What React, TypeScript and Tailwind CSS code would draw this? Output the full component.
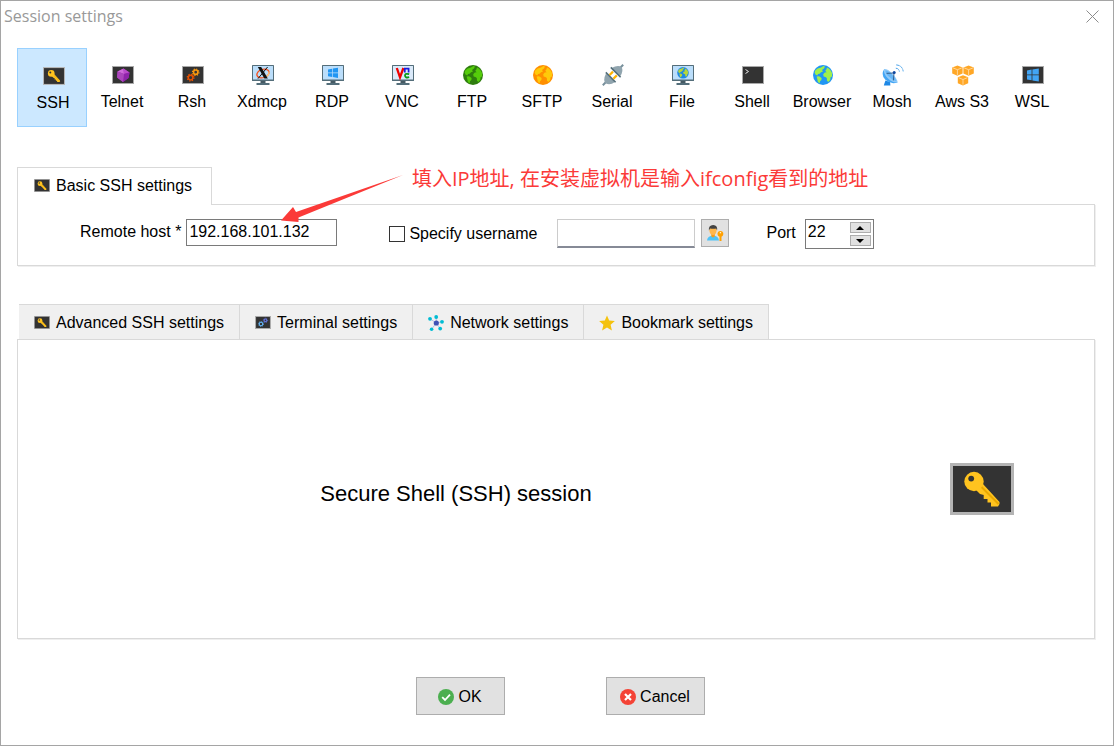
import { useState, type ReactNode } from "react";

function KeyTerminal({ className }: { className: string }) {
  return (
    <svg viewBox="0 0 64 52" className={className} aria-hidden="true">
      <rect width="64" height="52" fill="#b4b4b4" />
      <rect x="3" y="3" width="58" height="46" fill="#333333" />
      <path
        d="M33 21 L49.5 39 V41 L48 43.5 H41 V39.5 H37.5 V36 H33.7 V32 L30 31 L26 27 Z"
        fill="#ffc31f"
      />
      <path d="M31 23.5 L48.5 41" stroke="#e9a800" strokeWidth="2" />
      <circle cx="24" cy="18.5" r="9.7" fill="#ffc31f" />
      <circle cx="21.2" cy="15.6" r="2.9" fill="#333333" />
    </svg>
  );
}

function Screen({ children }: { children: ReactNode }) {
  return (
    <svg width="22" height="18" viewBox="0 0 22 18" aria-hidden="true">
      <rect width="22" height="18" fill="#a9a9a9" />
      <rect x="1" y="1" width="20" height="16" fill="#333333" />
      {children}
    </svg>
  );
}

function Monitor({ fill = "#bbdefb", children }: { fill?: string; children: ReactNode }) {
  return (
    <svg width="22" height="20" viewBox="0 0 22 20" aria-hidden="true">
      <rect width="22" height="16" rx="0.6" fill="#546e7a" />
      <rect x="1" y="1" width="20" height="13.5" fill={fill} />
      <rect x="8.5" y="16" width="5" height="2.5" fill="#455a64" />
      <rect x="4.5" y="18" width="13" height="2" fill="#546e7a" />
      {children}
    </svg>
  );
}

function GlobeShape({ sea, land }: { sea: string; land: string }) {
  return (
    <>
      <circle cx="10" cy="10" r="10" fill={sea} />
      <path
        d="M2.2 5.4 L4.6 3.4 L8 2.6 L10.4 1 L12 1.6 L11 3.4 L9 5 L10 6.4 L8 7.2 L6.6 8.8 L5 9 L4.4 10.6 L2.4 9.4 L1.6 7.4 Z"
        fill={land}
      />
      <path d="M3.6 11.6 L6 11.2 L8.6 13 L8.4 15 L7 16.2 L6.6 18.4 L4.8 16.8 L4.4 14.4 Z" fill={land} />
      <path
        d="M14 2.4 Q18 4.4 19 8 L19 11.4 L17.6 12.2 L17.2 15 L15.4 17 L14 15.8 L13.8 13 L12.4 12 L10.6 11.4 L10.2 9.2 L11.8 7.6 L13.6 7.2 L12.2 5.8 L13.4 4.6 Z"
        fill={land}
      />
    </>
  );
}

function Globe({ sea, land }: { sea: string; land: string }) {
  return (
    <svg width="20" height="20" viewBox="0 0 20 20" aria-hidden="true">
      <GlobeShape sea={sea} land={land} />
    </svg>
  );
}

function Gear({ x, y, r, color }: { x: number; y: number; r: number; color: string }) {
  return (
    <g transform={`translate(${x} ${y})`} fill="none" stroke={color}>
      <circle r={r} strokeWidth="1.5" />
      <circle r={r + 1.1} strokeWidth="1.2" strokeDasharray={`${(r + 1.1) * 0.393} ${(r + 1.1) * 0.393}`} />
    </g>
  );
}

function TelnetIcon() {
  return (
    <Screen>
      <path d="M11.5 2.5 L17.5 6.5 L16.5 12 L11 16 L5 11.5 L5.5 5.5 Z" fill="#9c27b0" />
      <path d="M11.5 2.5 L5.5 5.5 L12 8 Z" fill="#ce6bdb" />
      <path d="M11.5 2.5 L17.5 6.5 L12 8 Z" fill="#ba4bc9" />
      <path d="M12 8 L17.5 6.5 L16.5 12 L11 16 Z" fill="#8e24aa" />
      <path d="M5.5 5.5 L12 8 L11 16 L5 11.5 Z" fill="#ab47bc" />
    </Screen>
  );
}

function RshIcon() {
  return (
    <Screen>
      <Gear x={13.7} y={6.2} r={2.1} color="#fb9a0e" />
      <Gear x={8.6} y={11.6} r={2.3} color="#e65100" />
    </Screen>
  );
}

function XdmcpIcon() {
  return (
    <Monitor>
      <ellipse cx="11" cy="8.5" rx="6.3" ry="4.2" fill="none" stroke="#f4511e" strokeWidth="1.3" transform="rotate(-18 11 8.5)" />
      <path d="M12 12.8 Q17 11 17.2 6.5" fill="none" stroke="#ffcc80" strokeWidth="1.2" />
      <path d="M5.8 2 H9.2 L15.8 13.6 H12.4 Z" fill="#111111" />
      <path d="M15.6 2 L6 13.6" stroke="#111111" strokeWidth="1" />
    </Monitor>
  );
}

function RdpIcon() {
  return (
    <Monitor>
      <path d="M6 4.4 L10.2 3.7 V7.5 H6 Z M10.9 3.6 L16 2.8 V7.5 H10.9 Z M6 8.2 H10.2 V12 L6 11.3 Z M10.9 8.2 H16 V12.9 L10.9 12.1 Z" fill="#2196f3" />
    </Monitor>
  );
}

function VncIcon() {
  return (
    <Monitor fill="#dbeafa">
      <path d="M4.8 3 L8 12.4 L11.4 3" fill="none" stroke="#f00000" strokeWidth="2.3" />
      <path d="M12.8 7.4 V3.6 H16.6 V7.4" fill="none" stroke="#1b1bdc" strokeWidth="1.7" />
      <path d="M17.2 9.2 Q13 8 13 10.6 Q13 13.2 17.2 12.2" fill="none" stroke="#0b9a17" strokeWidth="1.8" />
    </Monitor>
  );
}

function SerialIcon() {
  return (
    <svg width="22" height="22" viewBox="0 0 22 22" aria-hidden="true">
      <path d="M0.8 21.2 L4 18 M18 4 L21.2 0.8" stroke="#78909c" strokeWidth="2" />
      <path d="M4 9.5 L13 18 Q8 21.5 4 19.5 Q0.5 16.5 4 9.5 Z" fill="#90a4ae" />
      <path d="M9.5 4 L18 12.5 Q22 7 19.5 3 Q16 0.5 9.5 4 Z" fill="#90a4ae" />
      <path d="M3.8 8.4 L13.6 18.2 M8.8 3.4 L18.6 13.2" stroke="#546e7a" strokeWidth="1.6" />
      <path d="M7.6 11 L11 7.6 M11.4 14.8 L14.8 11.4" stroke="#ffb300" strokeWidth="2.2" />
    </svg>
  );
}

function FileIcon() {
  return (
    <Monitor>
      <g transform="translate(5.2 2) scale(0.58)">
        <GlobeShape sea="#1e88e5" land="#b5d63a" />
      </g>
    </Monitor>
  );
}

function ShellIcon() {
  return (
    <Screen>
      <path d="M3.5 3.5 L6.5 5.5 L3.5 7.5" fill="none" stroke="#e6e6e6" strokeWidth="1" />
    </Screen>
  );
}

function MoshIcon() {
  return (
    <svg width="22" height="22" viewBox="0 0 22 22" aria-hidden="true">
      <path d="M3.4 16.5 L1.8 21.6 H8.4 L8 18 Z" fill="#1e88e5" />
      <path d="M2.2 5 Q-1.4 11 3.4 15.8 Q8.8 20.8 15.6 18.4 Z" fill="#42a5f5" />
      <path d="M2.2 5 Q0.8 9.4 5.8 14.2 Q10.8 19.2 15.6 18.4 Q15.4 14.6 10.2 9.4 Q5.4 4.6 2.2 5 Z" fill="#90caf9" />
      <path d="M3.4 6.4 Q3.4 9.4 7 12.8 Q10.8 16.6 14.2 17 Q13.6 14 9.8 10.2 Q6 6.6 3.4 6.4 Z" fill="#64b5f6" />
      <path d="M12 9 L4.6 9.4 M12 9 L11.4 16.4" stroke="#37618f" strokeWidth="1" />
      <circle cx="12.2" cy="8.6" r="1.5" fill="#0d47a1" />
      <path d="M13.8 4.2 Q17 4.4 17.4 7.6 M14.2 0.9 Q20.4 1.4 21.2 7.4" fill="none" stroke="#4aa3ea" strokeWidth="1" strokeDasharray="3.4 0.8" />
    </svg>
  );
}

function Cube({ x, y }: { x: number; y: number }) {
  return (
    <g transform={`translate(${x} ${y})`}>
      <path d="M5.2 0 L10.4 2 V8 L5.2 10.4 L0 8 V2 Z" fill="#ffa726" />
      <path d="M0.8 2.5 L5.2 4.3 L9.6 2.5 M5.2 4.3 V9.6" fill="none" stroke="#ffe0b2" strokeWidth="0.8" />
    </g>
  );
}

function AwsIcon() {
  return (
    <svg width="22" height="21" viewBox="0 0 22 21" aria-hidden="true">
      <Cube x={0.2} y={0.4} />
      <Cube x={11.4} y={0.4} />
      <Cube x={5.8} y={10.2} />
    </svg>
  );
}

function WslIcon() {
  return (
    <Screen>
      <path d="M5 4.4 L9.6 3.6 V8.5 H5 Z M10.4 3.5 L16.8 2.4 V8.5 H10.4 Z M5 9.3 H9.6 V14.2 L5 13.5 Z M10.4 9.3 H16.8 V15.4 L10.4 14.4 Z" fill="#42a5f5" />
    </Screen>
  );
}

function TerminalGears() {
  return (
    <svg viewBox="0 0 22 18" className="h-[13px] w-4" aria-hidden="true">
      <rect width="22" height="18" fill="#a9a9a9" />
      <rect x="1.4" y="1.4" width="19.2" height="15.2" fill="#333333" />
      <Gear x={14.4} y={6} r={1.9} color="#6576e0" />
      <Gear x={8.2} y={11} r={2.4} color="#64b5f6" />
    </svg>
  );
}

function NetworkIcon() {
  return (
    <svg viewBox="0 0 16 16" className="size-4" aria-hidden="true">
      <path d="M8.3 8 L8.2 2 M8.3 8 L2 3.8 M8.3 8 L14 6.8 M8.3 8 L12.2 13.6 M8.3 8 L3.6 14.2" stroke="#b9c0e6" strokeWidth="1" />
      <circle cx="8.3" cy="8" r="2.6" fill="#3f51b5" />
      <g fill="#00bcd4">
        <circle cx="8.2" cy="2" r="1.9" />
        <circle cx="2" cy="3.8" r="1.9" />
        <circle cx="14" cy="6.8" r="1.9" />
        <circle cx="12.2" cy="13.6" r="1.9" />
        <circle cx="3.6" cy="14.2" r="1.8" />
      </g>
    </svg>
  );
}

function StarIcon() {
  return (
    <svg viewBox="0 0 16 16" className="size-4" aria-hidden="true">
      <path d="M8 0.4 L10.2 5.6 L15.9 6.1 L11.6 9.8 L12.9 15.4 L8 12.4 L3.1 15.4 L4.4 9.8 L0.1 6.1 L5.8 5.6 Z" fill="#f4c20d" />
    </svg>
  );
}

function UserKeyIcon() {
  return (
    <svg width="17" height="16" viewBox="0 0 17 16" aria-hidden="true">
      <path d="M0 15.6 Q0.4 11 6 10.6 Q11.6 11 12 15.6 Z" fill="#4fc3f7" />
      <path d="M4.3 8.5 H7.8 V11.4 L6 12.6 L4.3 11.4 Z" fill="#f59c1a" />
      <ellipse cx="6" cy="5.4" rx="3.6" ry="4.6" fill="#ffb74d" />
      <path d="M1.9 5.6 Q1.2 0.2 6.2 0 Q10.9 0.2 10.1 5.6 L9.2 3.6 Q6 4.2 3 3.4 Z" fill="#424242" />
      <circle cx="13.4" cy="8.8" r="2.9" fill="#ffa000" />
      <rect x="12.5" y="11" width="2" height="5" fill="#ffa000" />
      <rect x="12.8" y="7" width="1.3" height="1.3" fill="#fff3cd" />
    </svg>
  );
}

const sessionTypes: { name: string; icon: ReactNode }[] = [
  { name: "SSH", icon: <KeyTerminal className="h-[18px] w-[22px]" /> },
  { name: "Telnet", icon: <TelnetIcon /> },
  { name: "Rsh", icon: <RshIcon /> },
  { name: "Xdmcp", icon: <XdmcpIcon /> },
  { name: "RDP", icon: <RdpIcon /> },
  { name: "VNC", icon: <VncIcon /> },
  { name: "FTP", icon: <Globe sea="#2e7d0e" land="#55cc0b" /> },
  { name: "SFTP", icon: <Globe sea="#ff8f00" land="#ffca0a" /> },
  { name: "Serial", icon: <SerialIcon /> },
  { name: "File", icon: <FileIcon /> },
  { name: "Shell", icon: <ShellIcon /> },
  { name: "Browser", icon: <Globe sea="#2196f3" land="#a0f04a" /> },
  { name: "Mosh", icon: <MoshIcon /> },
  { name: "Aws S3", icon: <AwsIcon /> },
  { name: "WSL", icon: <WslIcon /> },
];

const settingTabs: { name: string; icon: ReactNode }[] = [
  { name: "Advanced SSH settings", icon: <KeyTerminal className="h-[13px] w-4" /> },
  { name: "Terminal settings", icon: <TerminalGears /> },
  { name: "Network settings", icon: <NetworkIcon /> },
  { name: "Bookmark settings", icon: <StarIcon /> },
];

const panel = "border border-[#d9d9d9] shadow-[1px_1px_0_#efefef]";
const spinButton = "flex h-[11px] w-[21px] items-center justify-center border border-[#adadad] bg-[#e1e1e1]";
const dialogButton = "flex h-[38px] items-center justify-center gap-1 border border-[#adadad] bg-[#e1e1e1] pt-px";

export default function App() {
  const [session, setSession] = useState("SSH");
  const [port, setPort] = useState("22");
  const step = (by: number) => setPort(String((Number(port) || 0) + by));

  return (
    <div className="flex min-h-screen flex-col border border-[#a5a5a5] bg-white font-['Liberation_Sans',Arial,sans-serif] text-base leading-5 text-black">
      <header className="flex h-[30px] items-center justify-between pr-3.5 pl-[3px]">
        <h1 className="font-['Open_Sans','Noto_Sans',sans-serif] text-base leading-5 text-[#999999]">Session settings</h1>
        <button type="button" aria-label="Close">
          <svg width="13" height="13" viewBox="0 0 13 13" aria-hidden="true">
            <path d="M0.5 0.5 L12.5 12.5 M12.5 0.5 L0.5 12.5" stroke="#8c8c8c" strokeWidth="1" />
          </svg>
        </button>
      </header>

      <nav className="mt-[17px] flex flex-wrap px-4" aria-label="Session type">
        {sessionTypes.map(({ name, icon }) => (
          <button
            key={name}
            type="button"
            aria-pressed={session === name}
            onClick={() => setSession(name)}
            className={
              session === name
                ? "flex h-[79px] w-[70px] flex-col items-center gap-1.5 border border-[#99d1ff] bg-[#cce8ff] pt-4 pl-0.5"
                : "flex h-[79px] w-[70px] flex-col items-center gap-1.5 border border-transparent pt-[15px]"
            }
          >
            <span className="flex h-[22px] items-center pl-0.5">{icon}</span>
            <span className="whitespace-nowrap">{name}</span>
          </button>
        ))}
      </nav>

      <main className="flex flex-1 flex-col px-4 pt-10">
        <section className="relative mr-0.5" aria-label="Basic SSH settings">
          <div role="tablist" className="flex">
            <button
              type="button"
              role="tab"
              aria-selected="true"
              className="relative z-10 -mb-px flex h-[38px] items-center gap-1.5 border border-b-0 border-[#d9d9d9] bg-white pr-[19px] pb-0.5 pl-4"
            >
              <KeyTerminal className="h-[13px] w-4" />
              Basic SSH settings
            </button>
          </div>
          <div className={`flex h-[62px] items-start pt-3.5 pl-[62px] ${panel}`}>
            <label htmlFor="host" className="leading-[26px] whitespace-nowrap">Remote host *</label>
            <input
              id="host"
              defaultValue="192.168.101.132"
              className="ml-[5px] h-[27px] w-[151px] border border-[#7a7a7a] px-0.5 pb-0.5 outline-none"
            />
            <div className="ml-[52px] flex h-[30px] items-center gap-1">
              <input
                id="specify"
                type="checkbox"
                className="size-4 appearance-none border border-[#333333] bg-white checked:bg-[#333333]"
              />
              <label htmlFor="specify" className="whitespace-nowrap">Specify username</label>
            </div>
            <input
              aria-label="Username"
              className="ml-5 h-[29px] w-[138px] border border-[#cccccc] border-b-2 border-b-[#868a96] px-0.5 outline-none"
            />
            <button
              type="button"
              aria-label="Choose user"
              className="ml-1.5 flex size-7 items-center justify-center border border-[#adadad] bg-[#e1e1e1]"
            >
              <UserKeyIcon />
            </button>
            <label htmlFor="port" className="ml-[37px] leading-7">Port</label>
            <div className="ml-[9px] flex h-[30px] w-[69px] border border-[#7a7a7a] bg-white pr-0.5">
              <input
                id="port"
                inputMode="numeric"
                value={port}
                onChange={(e) => setPort(e.target.value)}
                className="h-6 min-w-0 flex-1 pl-0.5 outline-none"
              />
              <div className="flex flex-col gap-0.5 pt-0.5">
                <button type="button" aria-label="Increase port" onClick={() => step(1)} className={spinButton}>
                  <svg width="8" height="4" viewBox="0 0 8 4" aria-hidden="true">
                    <path d="M4 0 L8 4 H0 Z" />
                  </svg>
                </button>
                <button type="button" aria-label="Decrease port" onClick={() => step(-1)} className={spinButton}>
                  <svg width="8" height="4" viewBox="0 0 8 4" aria-hidden="true">
                    <path d="M0 0 H8 L4 4 Z" />
                  </svg>
                </button>
              </div>
            </div>
          </div>
          <svg
            className="pointer-events-none absolute top-2 left-[264px] z-20"
            width="124"
            height="48"
            viewBox="0 0 124 48"
            aria-hidden="true"
          >
            <path d="M0 45.5 L12 32 L15 37 L122 0 L17.5 42.5 L17.5 47 Z" fill="#fb3a38" />
          </svg>
          <p className="absolute top-0 left-[395px] font-['Open_Sans','Noto_Sans_CJK_SC',sans-serif] text-xl leading-6 whitespace-nowrap text-[#fb3a38]">
            填入IP地址, 在安装虚拟机是输入ifconfig看到的地址
          </p>
        </section>

        <section className="mt-[38px] mr-0.5 flex flex-1 flex-col" aria-label="Session details">
          <div role="tablist" className="ml-0.5 flex">
            {settingTabs.map(({ name, icon }) => (
              <button
                key={name}
                type="button"
                role="tab"
                aria-selected="false"
                className="flex h-[35px] items-center gap-1.5 border-t border-r border-[#d9d9d9] bg-[#f0f0f0] pt-px pr-[15px] pl-[15px] whitespace-nowrap"
              >
                {icon}
                {name}
              </button>
            ))}
          </div>
          <div className={`flex flex-1 items-center ${panel}`}>
            <p className="flex-1 pt-2.5 text-center text-[22px] leading-7">Secure Shell (SSH) session</p>
            <KeyTerminal className="mr-20 ml-14 h-[52px] w-16" />
          </div>
        </section>
      </main>

      <footer className="flex justify-center gap-[101px] pt-[38px] pb-[30px] pl-1.5">
        <button type="button" className={`w-[89px] ${dialogButton}`}>
          <svg width="16" height="16" viewBox="0 0 16 16" aria-hidden="true">
            <circle cx="8" cy="8" r="8" fill="#4caf50" />
            <path d="M4.2 8.2 L7 11 L12 5.6" fill="none" stroke="#ffffff" strokeWidth="1.8" />
          </svg>
          OK
        </button>
        <button type="button" className={`w-[99px] ${dialogButton}`}>
          <svg width="16" height="16" viewBox="0 0 16 16" aria-hidden="true">
            <circle cx="8" cy="8" r="8" fill="#f44336" />
            <path d="M5 5 L11 11 M11 5 L5 11" stroke="#ffffff" strokeWidth="2.2" />
          </svg>
          Cancel
        </button>
      </footer>
    </div>
  );
}
